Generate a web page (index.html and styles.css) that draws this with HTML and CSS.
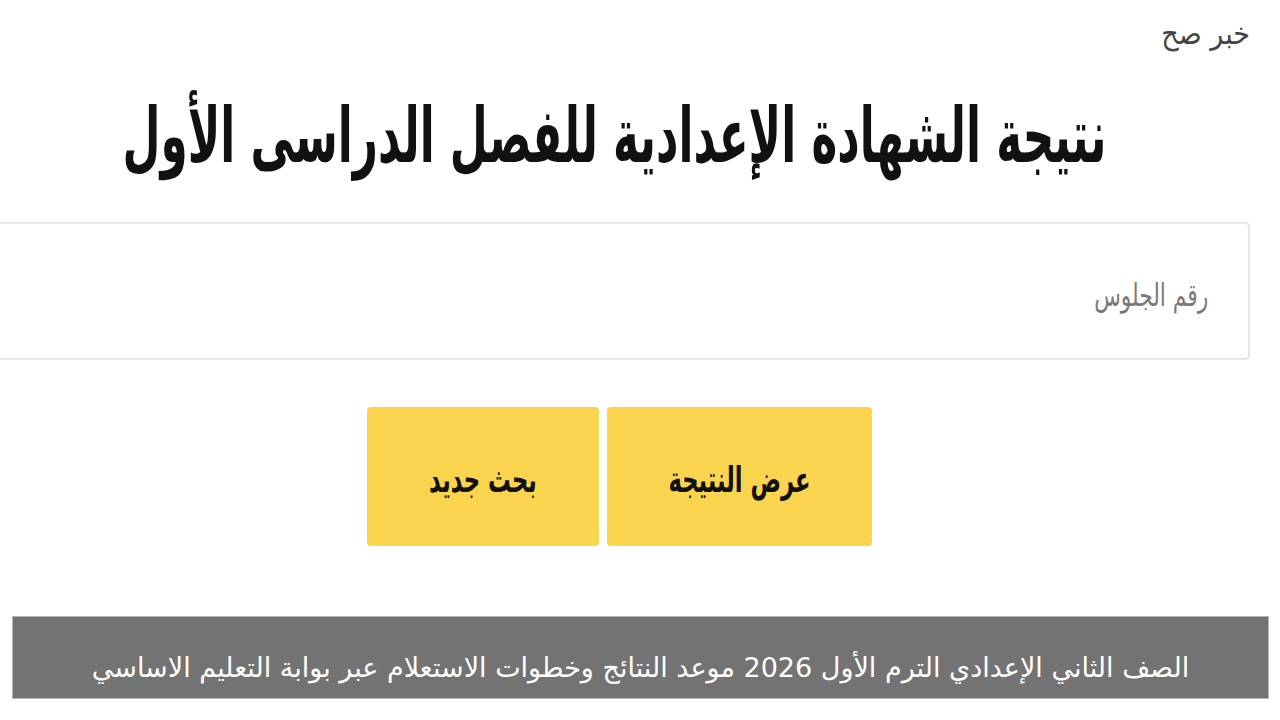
FILE: index.html
```html
<!DOCTYPE html>
<html lang="ar" dir="rtl">
<head>
<meta charset="utf-8">
<link rel="stylesheet" href="styles.css">
</head>
<body>
<div class="page">
  <div class="mark">خبر صح</div>
  <div class="title-row"><h1 class="title">نتيجة الشهادة الإعدادية للفصل الدراسى الأول</h1></div>
  <div class="field"><span class="placeholder">رقم الجلوس</span></div>
  <div class="actions">
    <div class="btn btn-show"><span class="btn-label">عرض النتيجة</span></div>
    <div class="btn btn-new"><span class="btn-label">بحث جديد</span></div>
  </div>
  <div class="banner">الصف الثاني الإعدادي الترم الأول 2026 موعد النتائج وخطوات الاستعلام عبر بوابة التعليم الاساسي</div>
</div>
</body>
</html>
```
FILE: styles.css
```css
html, body {
  margin: 0;
  padding: 0;
  background: #ffffff;
}
.page {
  position: relative;
  width: 1280px;
  height: 720px;
  overflow: hidden;
  font-family: "DejaVu Sans", sans-serif;
}
.mark {
  position: absolute;
  top: 16px;
  right: 30px;
  font-size: 30px;
  color: #444;
  font-family: "DejaVu Sans Condensed", "DejaVu Sans", sans-serif;
}
.title-row {
  height: 222px;
  box-sizing: border-box;
  padding: 88px 174px 0 0;
  white-space: nowrap;
}
.title {
  display: inline-block;
  margin: 0;
  font-family: "DejaVu Sans Condensed", "DejaVu Sans", sans-serif;
  font-size: 76px;
  line-height: 96px;
  font-weight: 700;
  color: #111;
  transform: scaleX(0.64);
  transform-origin: right center;
}
.field {
  margin: 0 30px 0 0;
  width: 1260px;
  height: 138px;
  box-sizing: border-box;
  border: 2px solid #e6e6e6;
  border-radius: 5px;
  display: flex;
  align-items: center;
  padding-right: 40px;
  padding-top: 8px;
}
.placeholder {
  font-family: "DejaVu Sans Condensed", "DejaVu Sans", sans-serif;
  font-size: 31px;
  color: #7a7a7a;
  display: inline-block;
  transform: scaleX(0.78);
  transform-origin: right center;
}
.actions {
  display: flex;
  gap: 8px;
  margin-top: 47px;
  padding-right: 408px;
  height: 139px;
}
.btn {
  display: flex;
  align-items: center;
  justify-content: center;
  background: #fbd44f;
  border-radius: 4px;
  font-family: "DejaVu Sans Condensed", "DejaVu Sans", sans-serif;
  font-size: 36px;
  font-weight: 700;
  color: #111;
  padding-top: 6px;
  box-sizing: border-box;
}
.btn-label {
  display: inline-block;
  transform: scaleX(0.7);
}
.btn-show { width: 265px; }
.btn-new { width: 232px; }
.banner {
  margin: 70px 11px 0 12px;
  height: 83px;
  box-sizing: border-box;
  background: #737373;
  border: 1px solid #b5b5b5;
  color: #fff;
  font-size: 27px;
  display: flex;
  align-items: center;
  justify-content: center;
  white-space: nowrap;
  padding-top: 20px;
}
```
